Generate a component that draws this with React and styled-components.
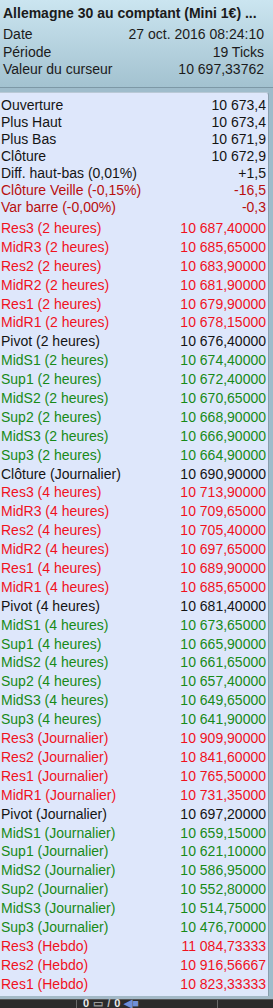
import React from 'react';
import styled, { createGlobalStyle } from 'styled-components';

const GlobalStyle = createGlobalStyle`
  html, body {
    margin: 0;
    padding: 0;
    background: #9fbccb;
    font-family: "Liberation Sans", Arial, sans-serif;
    font-size: 14px;
  }
`;

const colors = {
  dark: '#141414',
  brick: '#b80f0f',
  red: '#f0121e',
  green: '#188a18',
};

const stats = [
  ['Ouverture', '10 673,4', 'dark'],
  ['Plus Haut', '10 673,4', 'dark'],
  ['Plus Bas', '10 671,9', 'dark'],
  ['Clôture', '10 672,9', 'dark'],
  ['Diff. haut-bas (0,01%)', '+1,5', 'dark'],
  ['Clôture Veille (-0,15%)', '-16,5', 'brick'],
  ['Var barre (-0,00%)', '-0,3', 'brick'],
];

const levels = [
  ['Res3 (2 heures)', '10 687,40000', 'red'],
  ['MidR3 (2 heures)', '10 685,65000', 'red'],
  ['Res2 (2 heures)', '10 683,90000', 'red'],
  ['MidR2 (2 heures)', '10 681,90000', 'red'],
  ['Res1 (2 heures)', '10 679,90000', 'red'],
  ['MidR1 (2 heures)', '10 678,15000', 'red'],
  ['Pivot (2 heures)', '10 676,40000', 'dark'],
  ['MidS1 (2 heures)', '10 674,40000', 'green'],
  ['Sup1 (2 heures)', '10 672,40000', 'green'],
  ['MidS2 (2 heures)', '10 670,65000', 'green'],
  ['Sup2 (2 heures)', '10 668,90000', 'green'],
  ['MidS3 (2 heures)', '10 666,90000', 'green'],
  ['Sup3 (2 heures)', '10 664,90000', 'green'],
  ['Clôture (Journalier)', '10 690,90000', 'dark'],
  ['Res3 (4 heures)', '10 713,90000', 'red'],
  ['MidR3 (4 heures)', '10 709,65000', 'red'],
  ['Res2 (4 heures)', '10 705,40000', 'red'],
  ['MidR2 (4 heures)', '10 697,65000', 'red'],
  ['Res1 (4 heures)', '10 689,90000', 'red'],
  ['MidR1 (4 heures)', '10 685,65000', 'red'],
  ['Pivot (4 heures)', '10 681,40000', 'dark'],
  ['MidS1 (4 heures)', '10 673,65000', 'green'],
  ['Sup1 (4 heures)', '10 665,90000', 'green'],
  ['MidS2 (4 heures)', '10 661,65000', 'green'],
  ['Sup2 (4 heures)', '10 657,40000', 'green'],
  ['MidS3 (4 heures)', '10 649,65000', 'green'],
  ['Sup3 (4 heures)', '10 641,90000', 'green'],
  ['Res3 (Journalier)', '10 909,90000', 'red'],
  ['Res2 (Journalier)', '10 841,60000', 'red'],
  ['Res1 (Journalier)', '10 765,50000', 'red'],
  ['MidR1 (Journalier)', '10 731,35000', 'red'],
  ['Pivot (Journalier)', '10 697,20000', 'dark'],
  ['MidS1 (Journalier)', '10 659,15000', 'green'],
  ['Sup1 (Journalier)', '10 621,10000', 'green'],
  ['MidS2 (Journalier)', '10 586,95000', 'green'],
  ['Sup2 (Journalier)', '10 552,80000', 'green'],
  ['MidS3 (Journalier)', '10 514,75000', 'green'],
  ['Sup3 (Journalier)', '10 476,70000', 'green'],
  ['Res3 (Hebdo)', '11 084,73333', 'red'],
  ['Res2 (Hebdo)', '10 916,56667', 'red'],
  ['Res1 (Hebdo)', '10 823,33333', 'red'],
];

const Window = styled.div`
  width: 273px;
  height: 1008px;
  display: flex;
  flex-direction: column;
  overflow: hidden;
  background: #9fbccb;
`;

const Header = styled.header`
  height: 88px;
  flex-shrink: 0;
  box-sizing: border-box;
  padding: 4px 9px 0 3px;
  background: linear-gradient(#cbe5f0, #a3c2d0);
  border-bottom: 1px solid #7d98a6;
  color: #1b1b1b;
`;

const Title = styled.div`
  font-weight: bold;
  line-height: 18px;
  margin-bottom: 4px;
  white-space: nowrap;
`;

const InfoRow = styled.div`
  display: flex;
  justify-content: space-between;
  line-height: 17.5px;
`;

const Panel = styled.section`
  flex: 1;
  min-height: 0;
  margin: 4px 4px 0 0;
  background: #dee7fb;
  border-top: 1px solid #b9c9d6;
  border-right: 1px solid #8a9fae;
  border-top-right-radius: 3px;
  padding: 4px 2px 0 1px;
  overflow: hidden;
`;

const Row = styled.div`
  display: flex;
  justify-content: space-between;
  white-space: nowrap;
  height: ${p => p.$h}px;
  line-height: ${p => p.$h}px;
  color: ${p => colors[p.$tone]};
`;

const Levels = styled.div`
  margin-top: 3px;
`;

const Footer = styled.footer`
  height: 12px;
  flex-shrink: 0;
  display: flex;
  flex-direction: column;
`;

const FooterEdge = styled.div`
  height: 4px;
  background: #a3b9c7;
`;

const FooterBar = styled.div`
  flex: 1;
  background: #2b2b2b;
  display: flex;
  align-items: flex-start;
  gap: 4px;
  padding-left: 76px;
  border-top: 1px solid #555;
`;

const Sep = styled.span`
  width: 1px;
  height: 8px;
  background: #6a6a6a;
  margin-right: ${p => p.$mr || 0}px;
`;

const Glyph = styled.span`
  font-size: 11px;
  line-height: 7px;
  color: ${p => p.$c || '#e8e8e8'};
  font-weight: bold;
`;

export default function App() {
  return (
    <Window>
      <GlobalStyle />
      <Header>
        <Title>Allemagne 30 au comptant (Mini 1€) ...</Title>
        <InfoRow><span>Date</span><span>27 oct. 2016 08:24:10</span></InfoRow>
        <InfoRow><span>Période</span><span>19 Ticks</span></InfoRow>
        <InfoRow><span>Valeur du curseur</span><span>10 697,33762</span></InfoRow>
      </Header>
      <Panel>
        {stats.map(([name, value, tone]) => (
          <Row key={name} $h={17} $tone={tone}>
            <span>{name}</span>
            <span>{value}</span>
          </Row>
        ))}
        <Levels>
          {levels.map(([name, value, tone]) => (
            <Row key={name} $h={18.9} $tone={tone}>
              <span>{name}</span>
              <span>{value}</span>
            </Row>
          ))}
        </Levels>
      </Panel>
      <Footer>
        <FooterEdge />
        <FooterBar>
          <Sep $mr={2} />
          <Glyph>0</Glyph>
          <Glyph $c="#9a9a9a">▭</Glyph>
          <Glyph $c="#bbb">/</Glyph>
          <Glyph>0</Glyph>
          <Glyph $c="#6f8fd8">◀■</Glyph>
          <span style={{ flex: 1 }} />
          <Sep $mr={55} />
        </FooterBar>
      </Footer>
    </Window>
  );
}
